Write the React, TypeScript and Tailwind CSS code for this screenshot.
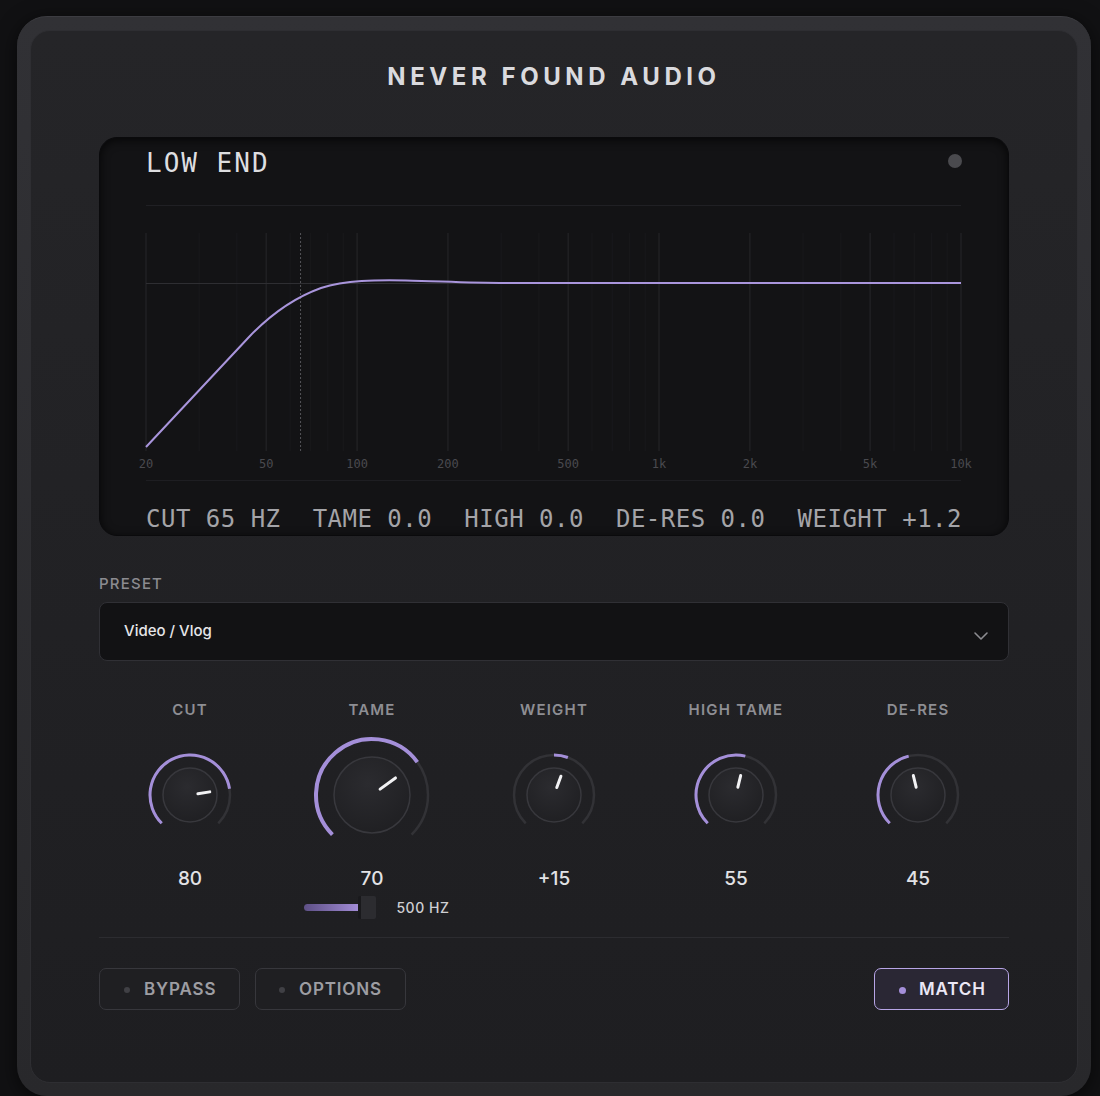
import React from "react";
import { ChevronDown } from "lucide-react";

const W = 815;
const xf = (f: number) => (W * Math.log10(f / 20)) / Math.log10(500);
const MAJOR: [number, string][] = [
  [20, "20"],
  [50, "50"],
  [100, "100"],
  [200, "200"],
  [500, "500"],
  [1000, "1k"],
  [2000, "2k"],
  [5000, "5k"],
  [10000, "10k"],
];
const MINOR = [30, 40, 60, 70, 80, 90, 300, 400, 600, 700, 800, 900, 3000, 4000, 6000, 7000, 8000, 9000];

function Graph() {
  const cut = xf(65);
  return (
    <svg width={W} height={276} className="overflow-visible block">
      <line x1={0} y1={0.5} x2={W} y2={0.5} stroke="#202024" strokeWidth={1} />
      {MINOR.map((f) => (
        <line key={f} x1={xf(f)} x2={xf(f)} y1={28} y2={246} stroke="#19191c" strokeWidth={1} />
      ))}
      {MAJOR.map(([f]) => (
        <line key={f} x1={xf(f)} x2={xf(f)} y1={28} y2={246} stroke="#27272a" strokeWidth={1} />
      ))}
      <line x1={0} y1={78.5} x2={W} y2={78.5} stroke="#2e2e32" strokeWidth={1} />
      <line x1={cut} x2={cut} y1={28} y2={246} stroke="#55555a" strokeWidth={1} strokeDasharray="2 2" />
      <path
        d="M0,242 L103,132 C125,109 150,92 175,83 C200,75 230,75 260,75.5 C290,76 320,78 360,78 L815,78"
        fill="none"
        stroke="#a995dc"
        strokeWidth={2}
      />
      {MAJOR.map(([f, l]) => (
        <text
          key={l}
          x={xf(f)}
          y={263}
          textAnchor="middle"
          fill="#4a4a4f"
          fontSize={12}
          fontFamily="'DejaVu Sans Mono', monospace"
        >
          {l}
        </text>
      ))}
      <line x1={0} y1={275.5} x2={W} y2={275.5} stroke="#1e1e22" strokeWidth={1} />
    </svg>
  );
}

function pt(cx: number, cy: number, r: number, a: number) {
  const rad = (a * Math.PI) / 180;
  return [cx + r * Math.sin(rad), cy - r * Math.cos(rad)];
}
function arc(cx: number, cy: number, r: number, a1: number, a2: number) {
  const [x1, y1] = pt(cx, cy, r, a1);
  const [x2, y2] = pt(cx, cy, r, a2);
  const large = a2 - a1 > 180 ? 1 : 0;
  return `M${x1},${y1} A${r},${r} 0 ${large} 1 ${x2},${y2}`;
}

function Knob({ v, bipolar, big }: { v: number; bipolar?: boolean; big?: boolean }) {
  const c = 65;
  const r = big ? 56 : 40;
  const kr = big ? 38 : 27;
  const p1 = big ? 10 : 8;
  const p2 = big ? 29 : 20;
  const a = -135 + v * 270;
  const start = bipolar ? 0 : -135;
  const [px1, py1] = pt(c, c, p1, a);
  const [px2, py2] = pt(c, c, p2, a);
  const id = big ? "kg-big" : "kg-sm";
  return (
    <svg width={130} height={130} className="block">
      <defs>
        <radialGradient id={id} cx="45%" cy="35%" r="70%">
          <stop offset="0%" stopColor="#2b2b2f" />
          <stop offset="100%" stopColor="#1f1f22" />
        </radialGradient>
      </defs>
      <path d={arc(c, c, r, -135, 135)} fill="none" stroke="#323236" strokeWidth={2.5} />
      <path d={arc(c, c, r, Math.min(start, a), Math.max(start, a))} fill="none" stroke="#a48fd9" strokeWidth={big ? 4 : 3} />
      <circle cx={c} cy={c} r={kr} fill={`url(#${id})`} stroke="#38383d" strokeWidth={1.5} />
      <line x1={px1} y1={py1} x2={px2} y2={py2} stroke="#f2f2f4" strokeWidth={3} strokeLinecap="round" />
    </svg>
  );
}

const KNOBS = [
  { label: "CUT", value: "80", v: 0.8 },
  { label: "TAME", value: "70", v: 0.7, big: true },
  { label: "WEIGHT", value: "+15", v: 0.575, bipolar: true },
  { label: "HIGH TAME", value: "55", v: 0.55 },
  { label: "DE-RES", value: "45", v: 0.45 },
];

const sans = { fontFamily: "Inter, 'Noto Sans', sans-serif" };
const mono = { fontFamily: "'DejaVu Sans Mono', 'Liberation Mono', monospace" };

export default function App() {
  return (
    <div className="min-h-screen bg-[#111113] pt-[16px] pl-[17px]" style={sans}>
      <div className="w-[1074px] h-[1080px] rounded-[30px] bg-gradient-to-b from-[#313135] to-[#28282b] p-[13px] border-t border-[#3c3c41] shadow-[0_4px_20px_rgba(0,0,0,0.6)]">
        <div className="h-full rounded-[20px] bg-gradient-to-b from-[#252528] to-[#1e1e21] border border-[#2e2e32] px-[68px] flex flex-col">
          <div className="pt-[32px] h-[60px] text-center text-[24px] leading-[28px] font-bold tracking-[0.19em] text-[#dadade]">
            NEVER FOUND AUDIO
          </div>

          <div className="mt-[46px] h-[399px] rounded-[18px] bg-[#131315] border border-[#0a0a0c] shadow-[inset_0_2px_10px_rgba(0,0,0,0.7)] flex flex-col px-[46px]">
            <div className="pt-[10px] flex items-center justify-between">
              <div className="text-[26px] leading-[30px] tracking-[2px] text-[#dedee0]" style={mono}>
                LOW END
              </div>
              <div className="w-[14px] h-[14px] rounded-full bg-[#4a4a4e] -mt-[4px]" />
            </div>
            <div className="mt-[27px]">
              <Graph />
            </div>
            <div className="mt-[24px] flex justify-between text-[24px] leading-[28px] tracking-[0.5px] text-[#a4a4a8]" style={mono}>
              <span>CUT 65 HZ</span>
              <span>TAME 0.0</span>
              <span>HIGH 0.0</span>
              <span>DE-RES 0.0</span>
              <span>WEIGHT +1.2</span>
            </div>
          </div>

          <div className="mt-[39px] text-[15px] leading-[18px] font-medium tracking-[0.08em] text-[#8b8b90]">PRESET</div>
          <div className="mt-[9px] h-[59px] rounded-[8px] bg-[#121214] border border-[#303035] flex items-center justify-between pl-[24px] pr-[15px]">
            <span className="text-[15px] font-medium text-[#e6e6e9]">Video / Vlog</span>
            <ChevronDown size={24} color="#8c8c91" strokeWidth={1.6} className="mt-[8px]" />
          </div>

          <div className="mt-[40px] h-[216px] grid grid-cols-5">
            {KNOBS.map((k) => (
              <div key={k.label} className="flex flex-col items-center">
                <div className="h-[18px] leading-[18px] text-[15px] font-semibold tracking-[0.08em] text-[#8e8e93]">{k.label}</div>
                <div className="mt-[11px]">
                  <Knob v={k.v} bipolar={k.bipolar} big={k.big} />
                </div>
                <div className="mt-[7px] h-[24px] leading-[24px] text-[19px] font-medium text-[#e2e2e5]">{k.value}</div>
                {k.big && (
                  <div className="mt-[6px] h-[20px] flex items-center gap-[20px] pl-[10px]">
                    <div className="flex items-center w-[72px]">
                      <div className="h-[7px] w-[54px] rounded-l-full bg-gradient-to-r from-[#5e5086] to-[#a28cd6]" />
                      <div className="h-[23px] w-[18px] rounded-[2px] bg-[#2c2c30] border-l-[3px] border-[#19191c]" />
                    </div>
                    <span className="text-[14px] font-medium tracking-[0.04em] text-[#cfcfd3]">500 HZ</span>
                  </div>
                )}
              </div>
            ))}
          </div>

          <div className="mt-[20px] border-t border-[#2c2c30]" />

          <div className="mt-[30px] flex items-center">
            <button className="h-[42px] w-[141px] rounded-[7px] border border-[#37373c] bg-[#1f1f22] flex items-center pl-[24px] pt-[2px] gap-[14px]">
              <span className="w-[6px] h-[6px] rounded-full bg-[#404045]" />
              <span className="text-[17px] font-semibold tracking-[0.05em] text-[#9d9da2]">BYPASS</span>
            </button>
            <button className="ml-[15px] h-[42px] w-[151px] rounded-[7px] border border-[#37373c] bg-[#1f1f22] flex items-center pl-[23px] pt-[2px] gap-[14px]">
              <span className="w-[6px] h-[6px] rounded-full bg-[#404045]" />
              <span className="text-[17px] font-semibold tracking-[0.05em] text-[#9d9da2]">OPTIONS</span>
            </button>
            <button className="ml-auto h-[42px] w-[135px] rounded-[7px] border-[1.5px] border-[#b7a5e6] bg-[#2a2734] flex items-center pl-[24px] pt-[2px] gap-[13px]">
              <span className="w-[7px] h-[7px] rounded-full bg-[#a48fd9]" />
              <span className="text-[17px] font-semibold tracking-[0.05em] text-[#ebe7f5]">MATCH</span>
            </button>
          </div>
        </div>
      </div>
    </div>
  );
}
